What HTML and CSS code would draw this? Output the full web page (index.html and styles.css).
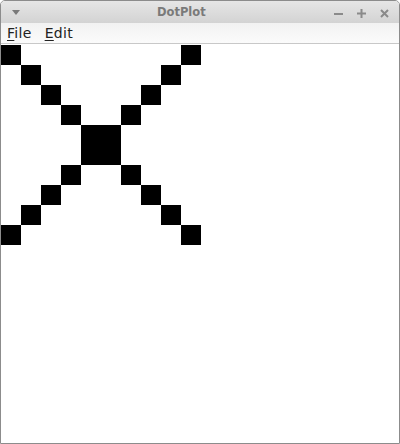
FILE: index.html
```html
<!DOCTYPE html>
<html>
<head>
<meta charset="utf-8">
<link rel="stylesheet" href="styles.css">
</head>
<body>
<div class="window">
  <div class="titlebar">
    <svg class="menu-arrow" width="8" height="5" viewBox="0 0 8 5"><path d="M0 0H8L4 5Z" fill="#7a7a7a"/></svg>
    <span class="title">DotPlot</span>
    <div class="controls">
      <svg width="9" height="9" viewBox="0 0 9 9"><rect x="0" y="4" width="9" height="2" fill="#8a8a8a"/></svg>
      <svg width="9" height="9" viewBox="0 0 9 9"><rect x="0" y="3.5" width="9" height="2" fill="#8a8a8a"/><rect x="3.5" y="0" width="2" height="9" fill="#8a8a8a"/></svg>
      <svg width="9" height="9" viewBox="0 0 9 9"><path d="M1 1L8 8M8 1L1 8" stroke="#8a8a8a" stroke-width="2"/></svg>
    </div>
  </div>
  <div class="menubar">
    <span class="menu"><u>F</u>ile</span>
    <span class="menu"><u>E</u>dit</span>
  </div>
  <div class="canvas">
    <div class="grid">
      <div class="c" style="grid-area:1/1"></div>
      <div class="c" style="grid-area:2/2"></div>
      <div class="c" style="grid-area:3/3"></div>
      <div class="c" style="grid-area:4/4"></div>
      <div class="c" style="grid-area:5/5/7/7"></div>
      <div class="c" style="grid-area:7/4"></div>
      <div class="c" style="grid-area:8/3"></div>
      <div class="c" style="grid-area:9/2"></div>
      <div class="c" style="grid-area:10/1"></div>
      <div class="c" style="grid-area:1/10"></div>
      <div class="c" style="grid-area:2/9"></div>
      <div class="c" style="grid-area:3/8"></div>
      <div class="c" style="grid-area:4/7"></div>
      <div class="c" style="grid-area:7/7"></div>
      <div class="c" style="grid-area:8/8"></div>
      <div class="c" style="grid-area:9/9"></div>
      <div class="c" style="grid-area:10/10"></div>
    </div>
  </div>
</div>
</body>
</html>
```
FILE: styles.css
```css
html, body {
  margin: 0;
  padding: 0;
  background: #ffffff;
}
.window {
  width: 400px;
  height: 444px;
  box-sizing: border-box;
  border: 1px solid #8c8c8c;
  border-radius: 5px 5px 0 0;
  overflow: hidden;
  display: flex;
  flex-direction: column;
  background: #ffffff;
  font-family: "DejaVu Sans", sans-serif;
}
.titlebar {
  height: 22px;
  flex: none;
  position: relative;
  background: linear-gradient(#e6e6e6, #d3d3d3);
  display: flex;
  align-items: center;
}
.menu-arrow {
  margin-left: 11px;
  margin-top: 1px;
}
.title {
  position: absolute;
  left: 156px;
  top: 4px;
  font-size: 11.5px;
  font-weight: bold;
  color: #7a7a7a;
}
.controls {
  margin-left: auto;
  margin-right: 10px;
  display: flex;
  gap: 14px;
  margin-top: 2px;
}
.controls svg {
  display: block;
}
.menubar {
  height: 20px;
  flex: none;
  background: linear-gradient(#f2f2f2, #fbfbfb);
  border-bottom: 1px solid #c8c8c8;
  display: flex;
  align-items: center;
  padding-left: 6px;
  gap: 13px;
}
.menu {
  font-size: 14px;
  color: #222222;
  letter-spacing: 0.3px;
}
.menu u {
  text-underline-offset: 2px;
}
.canvas {
  flex: 1;
  padding-top: 1px;
  background: #ffffff;
}
.grid {
  display: grid;
  grid-template-columns: repeat(10, 20px);
  grid-template-rows: repeat(10, 20px);
}
.c {
  background: #000000;
}
```
